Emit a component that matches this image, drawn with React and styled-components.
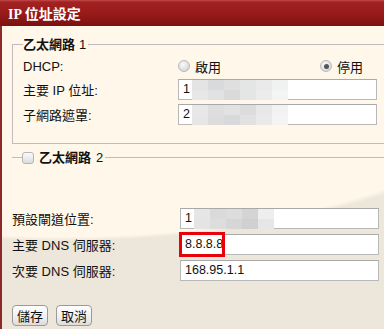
import React from 'react';
import styled, { createGlobalStyle } from 'styled-components';

const GlobalStyle = createGlobalStyle`
  html, body {
    margin: 0;
    padding: 0;
    overflow: hidden;
  }
  body {
    font-family: "Liberation Sans", "Noto Sans CJK TC", sans-serif;
    font-size: 13px;
    color: #111;
  }
`;

const Page = styled.div`
  width: 384px;
  height: 329px;
  display: flex;
  flex-direction: column;
  overflow: hidden;
`;

const TitleBar = styled.div`
  height: 26px;
  flex: none;
  display: flex;
  align-items: center;
  padding-left: 8px;
  background: linear-gradient(#c24a4a 0px, #a32222 2px, #971a1a 14px, #7c1010 26px);
  color: #fff;
  font-weight: bold;
  font-size: 14px;
  font-family: "Liberation Serif", "Noto Sans CJK TC", serif;
`;

const Body = styled.div`
  flex: 1;
  border-left: 2px solid #8c2a2a;
  padding: 11px 0 0 10px;
  background: radial-gradient(ellipse 520px 215px at 60px 0px, #fff7e9 98%, #ede6da 100%);
`;

const Fieldset = styled.fieldset`
  margin: 0 -20px 0 0;
  padding: 4px 0 17px 10px;
  border: 1px solid #c1bbbf;
  border-right: none;
  min-width: 0;
`;

const CollapsedFieldset = styled(Fieldset)`
  border-width: 1px 0 0 0;
  margin-top: 6px;
  padding: 0;
  height: 0;
`;

const Legend = styled.legend`
  padding: 0 2px 0 0;
  font-weight: bold;
  font-size: 13px;
  line-height: 15px;
  display: flex;
  align-items: center;
  gap: 4px;
  color: #111;
`;

const CheckLegend = styled(Legend)`
  margin-left: 10px;
  gap: 5px;
`;

const LegendNum = styled.span`
  font-weight: normal;
  font-family: "Liberation Sans", sans-serif;
`;

const Row = styled.div`
  display: grid;
  grid-template-columns: ${p => p.$labelWidth}px 199px;
  align-items: center;
  height: ${p => p.$h || 26}px;
`;

const Label = styled.span`
  font-size: 13px;
  white-space: pre;
`;

const RadioGroup = styled.div`
  display: grid;
  grid-template-columns: 142px auto;
  align-items: center;
`;

const RadioOption = styled.label`
  display: flex;
  align-items: center;
  gap: 5px;
`;

const Radio = styled.span`
  width: 12px;
  height: 12px;
  border-radius: 50%;
  border: 1px solid #b9b9b9;
  background: radial-gradient(circle at 40% 35%, #fafafa, #d6d6d6 80%);
  display: flex;
  align-items: center;
  justify-content: center;
  box-sizing: border-box;
  &::after {
    content: '';
    width: 5px;
    height: 5px;
    border-radius: 50%;
    background: ${p => (p.$checked ? '#555' : 'transparent')};
  }
`;

const Input = styled.div`
  position: relative;
  height: 21px;
  box-sizing: border-box;
  border: 1px solid #b8b8b8;
  border-top-color: #a9a9a9;
  background: #fff;
  display: flex;
  align-items: center;
  padding-left: 4px;
  font-family: "Liberation Sans", sans-serif;
  font-size: 12.5px;
`;

const Mosaic = styled.div`
  display: grid;
  grid-template-columns: repeat(${p => p.$cols}, 16px);
  grid-auto-rows: 10px;
  margin-left: 2px;
  align-self: stretch;
`;

const Cell = styled.div`
  background: ${p => p.$c};
`;

const Highlight = styled.div`
  position: absolute;
  left: -2px;
  top: -3px;
  width: 46px;
  height: 25px;
  box-sizing: border-box;
  border: 3px solid #e8000b;
`;

const Checkbox = styled.span`
  width: 12px;
  height: 12px;
  border: 1px solid #b5b5b5;
  border-radius: 3px;
  background: linear-gradient(#fbfbfb, #dcdcdc);
  box-sizing: border-box;
`;

const Lower = styled.div`
  padding-top: 40px;
  display: flex;
  flex-direction: column;
`;

const Buttons = styled.div`
  display: flex;
  gap: 8px;
  margin-top: 22px;
`;

const Button = styled.button`
  height: 21px;
  padding: 0 4px;
  border: 1px solid #9a9a9a;
  border-radius: 4px;
  background: linear-gradient(#ffffff, #eeeeee 60%, #dcdcdc);
  font-family: "Noto Sans CJK TC", sans-serif;
  font-size: 13px;
  line-height: 19px;
  color: #111;
`;

const MOSAIC_A = [
  '#e4e4e4', '#d9dadb', '#dfdfe0', '#e4e5e5', '#eaeaeb', '#f0f1f1',
  '#e7e7e8', '#e2e2e3', '#dadadb', '#e5e5e5', '#ececec', '#f4f4f4',
];
const MOSAIC_B = [
  '#e8e8e8', '#dedede', '#e2e2e2', '#dcdcdc', '#e8e8e8', '#f2f2f2',
  '#e6e6e6', '#dcdcdd', '#d8d9da', '#e1e1e1', '#e9e9e9', '#f4f4f4',
];
const MOSAIC_C = [
  '#e6e6e6', '#dadada', '#dddddd', '#d4d4d4', '#eeeeee',
  '#e4e4e4', '#dddddd', '#d6d6d6', '#d0d0d0', '#e6e6e6',
];

function Blurred({ colors, cols }) {
  return (
    <Mosaic $cols={cols}>
      {colors.map((c, i) => <Cell key={i} $c={c} />)}
    </Mosaic>
  );
}

export default function App() {
  return (
    <Page>
      <GlobalStyle />
      <TitleBar>IP 位址設定</TitleBar>
      <Body>
        <Fieldset>
          <Legend>乙太網路<LegendNum>1</LegendNum></Legend>
          <Row $labelWidth={155} $h={20}>
            <Label>DHCP:</Label>
            <RadioGroup>
              <RadioOption><Radio />啟用</RadioOption>
              <RadioOption><Radio $checked />停用</RadioOption>
            </RadioGroup>
          </Row>
          <Row $labelWidth={155} $h={26}>
            <Label>主要 IP 位址:</Label>
            <Input>1<Blurred colors={MOSAIC_A} cols={6} /></Input>
          </Row>
          <Row $labelWidth={155} $h={24}>
            <Label>子網路遮罩:</Label>
            <Input>2<Blurred colors={MOSAIC_B} cols={6} /></Input>
          </Row>
        </Fieldset>
        <CollapsedFieldset>
          <CheckLegend><Checkbox />乙太網路<LegendNum>2</LegendNum></CheckLegend>
        </CollapsedFieldset>
        <Lower>
          <Row $labelWidth={168}>
            <Label>預設閘道位置:</Label>
            <Input>1<Blurred colors={MOSAIC_C} cols={5} /></Input>
          </Row>
          <Row $labelWidth={168}>
            <Label>主要 DNS 伺服器:</Label>
            <Input>8.8.8.8<Highlight /></Input>
          </Row>
          <Row $labelWidth={168}>
            <Label>次要 DNS 伺服器:</Label>
            <Input>168.95.1.1</Input>
          </Row>
          <Buttons>
            <Button>儲存</Button>
            <Button>取消</Button>
          </Buttons>
        </Lower>
      </Body>
    </Page>
  );
}
